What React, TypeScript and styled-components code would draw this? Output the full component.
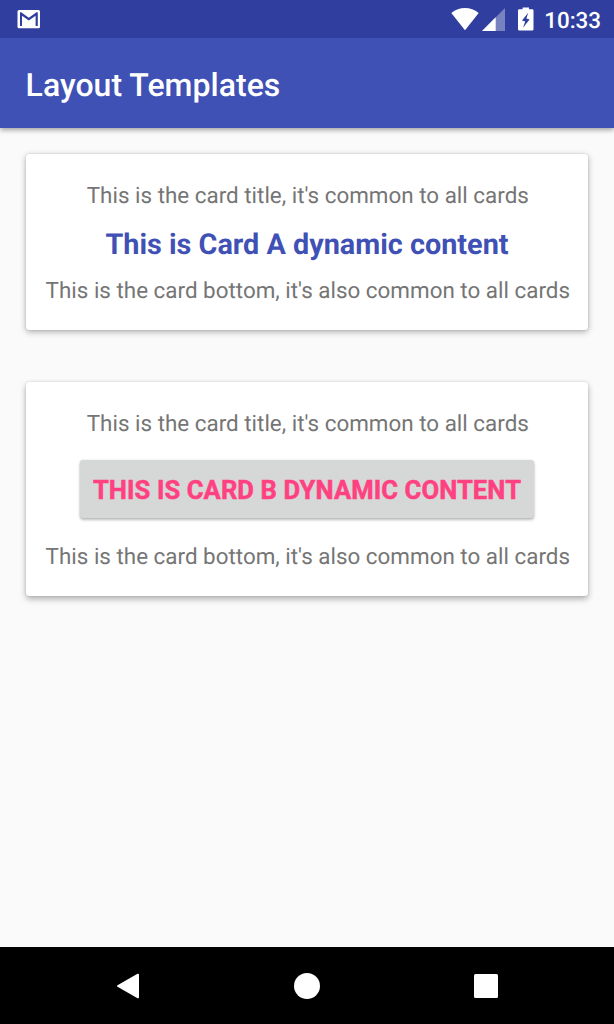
import React from "react";
import styled, { createGlobalStyle } from "styled-components";

const GlobalStyle = createGlobalStyle`
  * { box-sizing: border-box; }
  body { margin: 0; background: #fafafa; font-family: Roboto, "Liberation Sans", sans-serif; text-rendering: geometricPrecision; }
`;

const Screen = styled.div`
  display: flex;
  flex-direction: column;
  height: 1024px;
  overflow: hidden;
  background: #fafafa;
`;

const StatusBar = styled.header`
  position: relative;
  z-index: 1;
  display: flex;
  flex: none;
  justify-content: space-between;
  height: 38.4px;
  padding: 0 13px 0 16px;
  background: #303f9f;
  color: #fff;
`;

const StatusGroup = styled.div`
  display: flex;
  align-items: center;
`;

const StatusIcon = styled.svg<{ $gap?: number }>`
  display: block;
  flex: none;
  margin-right: ${(p) => p.$gap ?? 0}px;
  fill: #fff;
`;

const Clock = styled.time`
  font-size: 22.4px;
  font-weight: 500;
  line-height: 38.4px;
  padding-top: 3px;
`;

const AppBar = styled.div`
  display: flex;
  flex: none;
  align-items: center;
  height: 89.6px;
  padding: 4px 25.6px 0;
  background: #3f51b5;
  box-shadow: 0 2px 5px rgba(0, 0, 0, 0.36);
`;

const Title = styled.h1`
  margin: 0;
  color: #fff;
  font-size: 32px;
  font-weight: 500;
  letter-spacing: 0.03px;
  line-height: 38px;
`;

const Content = styled.main`
  display: flex;
  flex: 1;
  flex-direction: column;
  gap: 51.2px;
  padding: 25.6px 25.6px 0;
`;

const CardFrame = styled.section<{ $height: number; $depth: number }>`
  display: flex;
  flex: none;
  flex-direction: column;
  align-items: center;
  height: ${(p) => p.$height}px;
  padding-top: 29px;
  border-radius: 3.2px;
  background: #fff;
  box-shadow: 0 ${(p) => p.$depth}px 6px rgba(0, 0, 0, 0.3), 0 0 2px rgba(0, 0, 0, 0.16);
`;

const CardText = styled.p`
  margin: 0;
  padding-left: 1.6px;
  color: #757575;
  font-size: 22.4px;
  letter-spacing: 0.01px;
  line-height: 26px;
  white-space: nowrap;
`;

const Headline = styled.h2`
  margin: 19px 0 16px;
  color: #3f51b5;
  font-size: 28.8px;
  font-weight: 700;
  line-height: 34px;
  white-space: nowrap;
`;

const CardButton = styled.button`
  flex: none;
  width: 454px;
  height: 58px;
  margin: 23px 0 26px;
  padding: 2px 0 0;
  border: 0;
  border-radius: 3.2px;
  background: #d6d7d7;
  box-shadow: 0 2px 3px rgba(0, 0, 0, 0.26), 0 0 2px rgba(0, 0, 0, 0.12);
  color: #ff4081;
  font: 700 25.6px Roboto, "Liberation Sans", sans-serif;
  letter-spacing: 0.09px;
  text-transform: uppercase;
  white-space: nowrap;
  -webkit-text-stroke: 0.5px #ff4081;
`;

const NavBar = styled.nav`
  display: flex;
  flex: none;
  align-items: center;
  justify-content: center;
  gap: 139px;
  height: 76.8px;
  background: #000;
`;

const NavIcon = styled.svg`
  display: block;
  width: 40px;
  height: 40px;
  fill: #fff;
  stroke: #fff;
  stroke-linejoin: round;
`;

interface CardProps {
  height: number;
  depth: number;
  children: React.ReactNode;
}

function Card({ height, depth, children }: CardProps) {
  return (
    <CardFrame $height={height} $depth={depth}>
      <CardText>This is the card title, it's common to all cards</CardText>
      {children}
      <CardText>This is the card bottom, it's also common to all cards</CardText>
    </CardFrame>
  );
}

export default function App() {
  return (
    <Screen>
      <GlobalStyle />
      <StatusBar>
        <StatusGroup>
          <StatusIcon width="26" height="38" viewBox="0 0 26 38">
            <path
              fillRule="evenodd"
              d="M3 10H22.5Q24 10 24 11.5V26.8Q24 28.3 22.5 28.3H3Q1.5 28.3 1.5 26.8V11.5Q1.5 10 3 10ZM4 12.2V26H6V15.8L12.8 20.4L19.6 15.8V26H21.8V12.2H20.5L12.8 17.7L5.2 12.2Z"
            />
          </StatusIcon>
        </StatusGroup>
        <StatusGroup>
          <StatusIcon width="28" height="38" viewBox="0 0 28 38" $gap={3}>
            <path d="M14 30.3L0.3 13Q6.5 8 14 8T27.7 13Z" />
          </StatusIcon>
          <StatusIcon width="23" height="38" viewBox="0 0 23 38" $gap={13}>
            <path d="M0 31L23 8V31Z" fillOpacity=".35" />
            <path d="M0 31L13.7 17.3V31Z" />
          </StatusIcon>
          <StatusIcon width="16" height="38" viewBox="0 0 16 38" $gap={10}>
            <path
              fillRule="evenodd"
              d="M4.6 7.4H11V9.3H14.2Q15.5 9.3 15.5 10.6V29.3Q15.5 30.6 14.2 30.6H1.3Q0 30.6 0 29.3V10.6Q0 9.3 1.3 9.3H4.6ZM10.2 12.8L4 20.4L7.2 21.4L5 27.8L11.6 19.6L8.4 18.6Z"
            />
          </StatusIcon>
          <Clock>10:33</Clock>
        </StatusGroup>
      </StatusBar>
      <AppBar>
        <Title>Layout Templates</Title>
      </AppBar>
      <Content>
        <Card height={176.8} depth={2}>
          <Headline>This is Card A dynamic content</Headline>
        </Card>
        <Card height={214.4} depth={3}>
          <CardButton>This is Card B dynamic content</CardButton>
        </Card>
      </Content>
      <NavBar>
        <NavIcon viewBox="0 0 40 40">
          <path d="M10 20L30 8.7V31.3Z" strokeWidth="2" />
        </NavIcon>
        <NavIcon viewBox="0 0 40 40">
          <circle cx="20" cy="20" r="13" strokeWidth="0" />
        </NavIcon>
        <NavIcon viewBox="0 0 40 40">
          <rect x="8" y="8" width="24" height="24" rx="1.5" strokeWidth="0" />
        </NavIcon>
      </NavBar>
    </Screen>
  );
}
